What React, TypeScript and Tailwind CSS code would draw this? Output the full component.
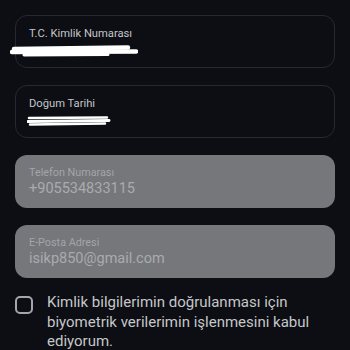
import { useState } from 'react'

function Scribble({ w, h, strike }: { w: number; h: number; strike?: boolean }) {
  return (
    <svg width={w} height={h} viewBox={`0 0 ${w} ${h}`} className="block">
      {strike ? (
        <g stroke="white" strokeLinecap="round" fill="none">
          <path d={`M2 3 L${w - 4} 2.5`} strokeWidth="2.5" />
          <path d={`M1 6.5 L${w - 2} 5.5`} strokeWidth="3" />
          <path d={`M3 9.5 L${w - 6} 8.5`} strokeWidth="2.5" />
        </g>
      ) : (
        <g stroke="white" strokeLinecap="round" fill="none">
          <path d={`M4 5 L${w - 10} 3.5`} strokeWidth="4.5" />
          <path d={`M2 8 L${w - 2} 7.5`} strokeWidth="4.5" />
          <path d={`M14 11 L${w - 30} 10.5`} strokeWidth="3" />
        </g>
      )}
    </svg>
  )
}

function Field({ label, children }: { label: string; children: React.ReactNode }) {
  return (
    <div className="h-[53px] rounded-[12px] border border-[#262930] px-[13px] pt-[11px]">
      <div className="text-[11.2px] leading-[14px] text-[#c4c5c8]">{label}</div>
      {children}
    </div>
  )
}

function Filled({ label, value }: { label: string; value: string }) {
  return (
    <div className="h-[53px] rounded-[12px] bg-[#75777b] px-[14px] pt-[11px]">
      <div className="text-[10.8px] leading-[13px] text-[#a3a5a8]">{label}</div>
      <div className="text-[14.5px] leading-[20px] text-[#a9abae]">{value}</div>
    </div>
  )
}

export default function App() {
  const [checked, setChecked] = useState(false)

  return (
    <div
      className="w-[350px] h-[350px] overflow-hidden bg-[#0c0e13] px-[15px] pt-[15px]"
      style={{ fontFamily: 'Roboto, "Noto Sans", sans-serif' }}
    >
      <div className="flex flex-col gap-[17px]">
        <Field label="T.C. Kimlik Numarası">
          <div className="-ml-[19px] mt-[3px]">
            <Scribble w={128} h={13} />
          </div>
        </Field>
        <Field label="Doğum Tarihi">
          <div className="-ml-[2px] mt-[4px]">
            <Scribble w={84} h={12} strike />
          </div>
        </Field>
        <Filled label="Telefon Numarası" value="+905534833115" />
        <Filled label="E-Posta Adresi" value="isikp850@gmail.com" />
      </div>
      <div className="mt-[15px] flex gap-[14px]">
        <button
          onClick={() => setChecked(!checked)}
          className="mt-[3px] h-[18px] w-[18px] shrink-0 rounded-[5px] border-2 border-[#a4a6aa]"
        />
        <p className="text-[15px] leading-[19.5px] text-[#c6c7ca]">
          Kimlik bilgilerimin doğrulanması için biyometrik verilerimin işlenmesini kabul ediyorum.
        </p>
      </div>
    </div>
  )
}
